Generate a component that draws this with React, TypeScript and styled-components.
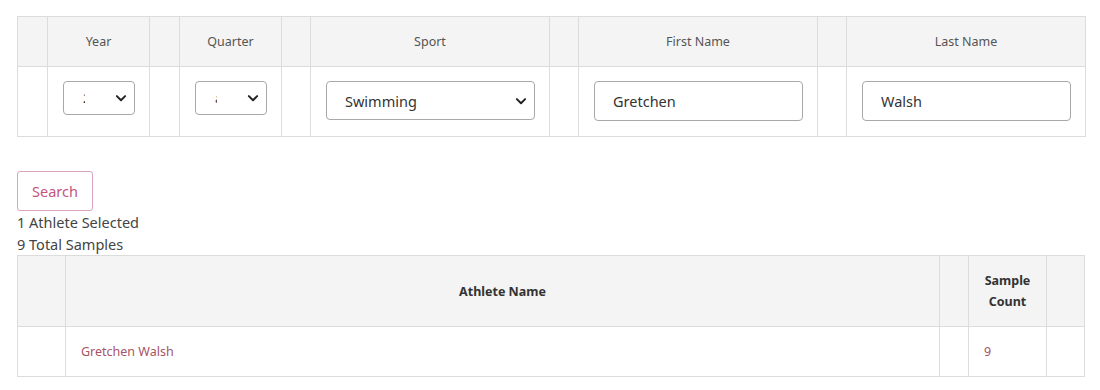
import React, { useState } from 'react'
import styled, { createGlobalStyle } from 'styled-components'

const GlobalStyle = createGlobalStyle`
  body {
    margin: 0;
    background: #ffffff;
    font-family: "Noto Sans", "Open Sans", sans-serif;
    color: #444;
  }
`

type Athlete = { name: string, samples: number }

const athletes: Athlete[] = [{ name: 'Gretchen Walsh', samples: 9 }]

const Chevron = () => (
  <ChevronIcon width="12" height="12" viewBox="0 0 16 16" aria-hidden>
    <path d="M2.5 5.5 8 11l5.5-5.5" fill="none" stroke="#222" strokeWidth="2.6" strokeLinecap="round" strokeLinejoin="round" />
  </ChevronIcon>
)

const App = () => {
  const [year, setYear] = useState('2024')
  const [quarter, setQuarter] = useState('all')
  const [sport, setSport] = useState('Swimming')
  const [firstName, setFirstName] = useState('Gretchen')
  const [lastName, setLastName] = useState('Walsh')

  const total = athletes.reduce((sum, a) => sum + a.samples, 0)

  return (
    <Page>
      <GlobalStyle />
      <Table>
        <colgroup>
          <col style={{ width: 30 }} />
          <col style={{ width: 102 }} />
          <col style={{ width: 30 }} />
          <col style={{ width: 102 }} />
          <col style={{ width: 29 }} />
          <col style={{ width: 239 }} />
          <col style={{ width: 29 }} />
          <col style={{ width: 239 }} />
          <col style={{ width: 29 }} />
          <col style={{ width: 239 }} />
        </colgroup>
        <thead>
          <tr>
            <FilterHead />
            <FilterHead>Year</FilterHead>
            <FilterHead />
            <FilterHead>Quarter</FilterHead>
            <FilterHead />
            <FilterHead>Sport</FilterHead>
            <FilterHead />
            <FilterHead>First Name</FilterHead>
            <FilterHead />
            <FilterHead>Last Name</FilterHead>
          </tr>
        </thead>
        <tbody>
          <tr>
            <FilterCell />
            <FilterCell>
              <SelectWrap>
                <SmallSelect value={year} onChange={e => setYear(e.target.value)}>
                  <option>2024</option>
                  <option>2023</option>
                </SmallSelect>
                <Chevron />
              </SelectWrap>
            </FilterCell>
            <FilterCell />
            <FilterCell>
              <SelectWrap>
                <SmallSelect value={quarter} onChange={e => setQuarter(e.target.value)}>
                  <option>all</option>
                  <option>1</option>
                </SmallSelect>
                <Chevron />
              </SelectWrap>
            </FilterCell>
            <FilterCell />
            <FilterCell>
              <SelectWrap>
                <Select value={sport} onChange={e => setSport(e.target.value)}>
                  <option>Swimming</option>
                  <option>Diving</option>
                </Select>
                <Chevron />
              </SelectWrap>
            </FilterCell>
            <FilterCell />
            <FilterCell>
              <TextInput value={firstName} onChange={e => setFirstName(e.target.value)} />
            </FilterCell>
            <FilterCell />
            <FilterCell>
              <TextInput value={lastName} onChange={e => setLastName(e.target.value)} />
            </FilterCell>
          </tr>
        </tbody>
      </Table>

      <SearchButton>Search</SearchButton>
      <Summary>{athletes.length} Athlete Selected</Summary>
      <Summary>{total} Total Samples</Summary>

      <Table>
        <colgroup>
          <col style={{ width: 48 }} />
          <col />
          <col style={{ width: 29 }} />
          <col style={{ width: 78 }} />
          <col style={{ width: 38 }} />
        </colgroup>
        <thead>
          <tr>
            <ResultHead />
            <ResultHead>Athlete Name</ResultHead>
            <ResultHead />
            <ResultHead>Sample Count</ResultHead>
            <ResultHead />
          </tr>
        </thead>
        <tbody>
          {athletes.map(a => (
            <tr key={a.name}>
              <ResultCell />
              <ResultCell><LinkText>{a.name}</LinkText></ResultCell>
              <ResultCell />
              <ResultCell><LinkText>{a.samples}</LinkText></ResultCell>
              <ResultCell />
            </tr>
          ))}
        </tbody>
      </Table>
    </Page>
  )
}

const Page = styled.div`
  padding: 16px 15px 16px 17px;
`

const Table = styled.table`
  width: 100%;
  table-layout: fixed;
  border-collapse: collapse;
  border: 1px solid #dcdcdc;
`

const FilterHead = styled.th`
  background: #f4f4f4;
  border: 1px solid #dcdcdc;
  padding: 14px 15px;
  height: 50px;
  box-sizing: border-box;
  font-size: 12.5px;
  font-weight: 400;
  line-height: 20px;
  color: #555;
  text-align: center;
`

const FilterCell = styled.td`
  border: 1px solid #dcdcdc;
  padding: 14px 14px 14px 15px;
  height: 70px;
  box-sizing: border-box;
  vertical-align: top;
`

const SelectWrap = styled.div`
  position: relative;
`

const ChevronIcon = styled.svg`
  position: absolute;
  right: 8px;
  top: 50%;
  transform: translateY(-50%);
  pointer-events: none;
`

const Select = styled.select`
  appearance: none;
  width: 100%;
  height: 39px;
  box-sizing: border-box;
  border: 1px solid #a8a8a8;
  border-radius: 4px;
  background: #fff;
  padding: 0 34px 0 18px;
  font-family: "Noto Sans", sans-serif;
  font-size: 14.5px;
  color: #333;
  outline: none;
`

const SmallSelect = styled(Select)`
  height: 34px;
  padding: 0 49px 0 19px;
  font-size: 13px;
`

const TextInput = styled.input`
  width: 100%;
  height: 40px;
  box-sizing: border-box;
  border: 1px solid #a8a8a8;
  border-radius: 4px;
  padding: 0 18px;
  font-family: "Noto Sans", sans-serif;
  font-size: 14.5px;
  color: #333;
  outline: none;
`

const SearchButton = styled.button`
  display: block;
  margin-top: 34px;
  height: 40px;
  padding: 0 14px;
  background: #fff;
  border: 1px solid #d9a3bb;
  border-radius: 3px;
  color: #c2567f;
  font-family: "Noto Sans", sans-serif;
  font-size: 14.5px;
  cursor: pointer;
`

const Summary = styled.div`
  font-size: 14.5px;
  line-height: 22px;
  color: #444;
`

const ResultHead = styled.th`
  background: #f4f4f4;
  border: 1px solid #dcdcdc;
  padding: 14px 15px;
  height: 70px;
  box-sizing: border-box;
  font-size: 12.5px;
  font-weight: 700;
  line-height: 21px;
  color: #333;
  text-align: center;
`

const ResultCell = styled.td`
  border: 1px solid #dcdcdc;
  padding: 14px 15px;
  height: 50px;
  box-sizing: border-box;
  font-size: 12.5px;
  line-height: 20px;
`

const LinkText = styled.span`
  color: #a55466;
`

export default App
